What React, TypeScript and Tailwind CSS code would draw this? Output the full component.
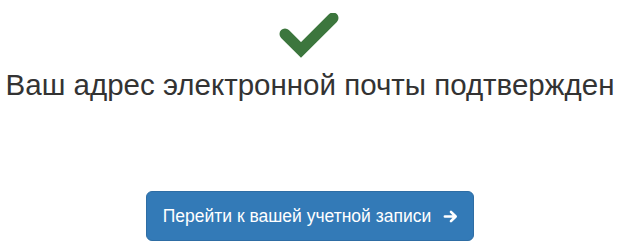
export default function App() {
  return (
    <div className="min-h-[250px] w-full bg-white pr-[9px] font-['Liberation_Sans',Arial,sans-serif] text-[#333]">
      <div className="flex flex-col items-center pt-[13px]">
        <svg width="64" height="48" viewBox="0 0 64 48" aria-hidden="true">
          <polyline
            points="7,21 23,37 55,5"
            fill="none"
            stroke="#3c763d"
            strokeWidth="11"
            strokeLinecap="round"
            strokeLinejoin="miter"
          />
        </svg>
        <h3 className="mt-[6px] text-center text-[29.5px] leading-[36px] font-normal">
          Ваш адрес электронной почты подтвержден
        </h3>
        <a
          href="#"
          className="mt-[88px] inline-flex items-center gap-[12px] rounded-[6px] border border-[#2e6da4] bg-[#337ab7] py-[11px] pl-[16px] pr-[15px] text-[17.5px] leading-[26px] text-white"
        >
          Перейти к вашей учетной записи
          <svg width="15" height="15" viewBox="0 0 16 16" aria-hidden="true">
            <path
              d="M2 8h11M8.5 3l5 5-5 5"
              fill="none"
              stroke="white"
              strokeWidth="2.8"
              strokeLinecap="round"
              strokeLinejoin="round"
            />
          </svg>
        </a>
      </div>
    </div>
  );
}
